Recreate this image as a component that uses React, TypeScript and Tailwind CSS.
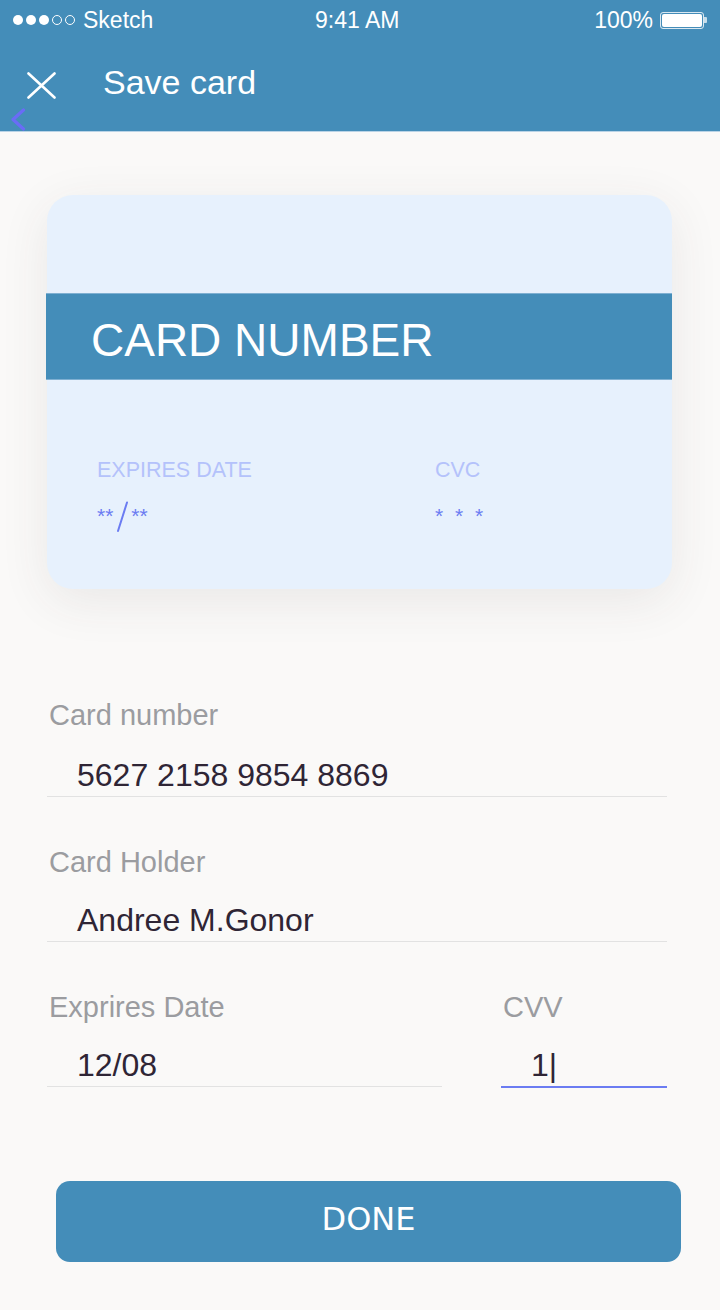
import React from "react";

const sans = { fontFamily: '"Liberation Sans", Arial, sans-serif' };

function StatusBar() {
  return (
    <div className="relative flex h-[40px] items-center px-[13px] text-[23px] text-white">
      <div className="flex items-center gap-[3px]">
        {[0, 1, 2].map((i) => (
          <span key={i} className="h-[10px] w-[10px] rounded-full bg-white" />
        ))}
        {[0, 1].map((i) => (
          <span key={i} className="h-[10px] w-[10px] rounded-full border border-white" />
        ))}
        <span className="ml-[5px]">Sketch</span>
      </div>
      <span className="absolute left-[315px] top-[7px] leading-[26px]">9:41 AM</span>
      <div className="ml-auto flex items-center gap-[7px]">
        <span>100%</span>
        <div className="flex items-center">
          <div className="h-[17px] w-[44px] rounded-[3px] border border-white/80 p-[1px]">
            <div className="h-full w-full rounded-[2px] bg-white" />
          </div>
          <div className="h-[6px] w-[3px] rounded-r-[1px] bg-white/70" />
        </div>
      </div>
    </div>
  );
}

function Header() {
  return (
    <div className="h-[132px] border-b border-[#b9d3e6] bg-[#448db9]">
      <StatusBar />
      <div className="relative flex h-[91px] items-start">
        <svg className="absolute left-[27px] top-[32px]" width="29" height="27" viewBox="0 0 29 27">
          <path d="M1.5 1.5 L27.5 25.5 M27.5 1.5 L1.5 25.5" stroke="white" strokeWidth="2.6" strokeLinecap="round" />
        </svg>
        <span className="ml-[103px] mt-[22px] text-[34px] leading-[40px] text-white">Save card</span>
        <svg className="absolute left-[10px] top-[68px]" width="16" height="23" viewBox="0 0 16 23">
          <path d="M13.5 2 L3 11.5 L13.5 21" fill="none" stroke="#6a6cf6" strokeWidth="3.2" strokeLinecap="round" strokeLinejoin="round" />
        </svg>
      </div>
    </div>
  );
}

function PaymentCard() {
  return (
    <div className="mx-[47px] mt-[63px] h-[394px] w-[625px] rounded-[26px] bg-[#e7f1fd] shadow-[0_12px_50px_rgba(70,60,50,0.09)]">
      <div className="h-[98px]" />
      <div className="-ml-[1px] flex h-[87px] w-[626px] items-center border-y border-[#7fb0d2] bg-[#448db9] pl-[45px] pt-[6px]">
        <span className="text-[46px] leading-[52px] text-white">CARD NUMBER</span>
      </div>
      <div className="mt-[78px] flex pl-[50px]">
        <div className="w-[338px]">
          <div className="text-[21.5px] leading-[24px] text-[#b4c2fb]">EXPIRES DATE</div>
          <div className="mt-[22px] flex items-start text-[21px] leading-[24px] text-[#6b7cf2]">
            <span>**</span>
            <svg className="-mt-[3px] mx-[2px]" width="14" height="32" viewBox="0 0 14 32">
              <path d="M12 1.5 L3 30" stroke="#6b7cf2" strokeWidth="2" strokeLinecap="round" />
            </svg>
            <span>**</span>
          </div>
        </div>
        <div>
          <div className="text-[21.5px] leading-[24px] text-[#b4c2fb]">CVC</div>
          <div className="mt-[22px] text-[21px] leading-[24px] tracking-[3px] text-[#6b7cf2]">* * *</div>
        </div>
      </div>
    </div>
  );
}

interface FieldProps {
  label: string;
  value: string;
  className?: string;
  active?: boolean;
  gapTop: string;
  labelGap: string;
}

function Field({ label, value, className, active, gapTop, labelGap }: FieldProps) {
  return (
    <div className={`${gapTop} ${className ?? ""}`}>
      <div className="pl-[2px] text-[29px] leading-[32px] text-[#9b9ca0]">{label}</div>
      <div
        className={`${labelGap} pb-[3px] pl-[30px] text-[32px] leading-[36px] text-[#2f2535] ${
          active ? "border-b-2 border-[#6b7cf2]" : "border-b border-[#e2e2e2]"
        }`}
      >
        {value}
      </div>
    </div>
  );
}

export default function App() {
  return (
    <div className="h-[1310px] w-[720px] overflow-hidden bg-[#faf9f8]" style={sans}>
      <Header />
      <PaymentCard />

      <div className="mx-[47px] w-[620px]">
        <Field label="Card number" value="5627 2158 9854 8869" gapTop="mt-[110px]" labelGap="mt-[26px]" />
        <Field label="Card Holder" value="Andree M.Gonor" gapTop="mt-[49px]" labelGap="mt-[24px]" />
        <div className="mt-[49px] flex justify-between">
          <Field label="Exprires Date" value="12/08" className="w-[395px]" gapTop="mt-0" labelGap="mt-[24px]" />
          <Field label="CVV" value="1|" className="w-[166px]" active gapTop="mt-0" labelGap="mt-[24px]" />
        </div>
      </div>

      <div className="ml-[56px] mt-[93px] flex h-[81px] w-[625px] items-center justify-center rounded-[14px] bg-[#448db9] pb-[6px]">
        <span
          className="text-[32px] leading-[36px] text-white"
          style={{ fontFamily: '"DejaVu Sans", Verdana, sans-serif' }}
        >
          DONE
        </span>
      </div>
    </div>
  );
}
